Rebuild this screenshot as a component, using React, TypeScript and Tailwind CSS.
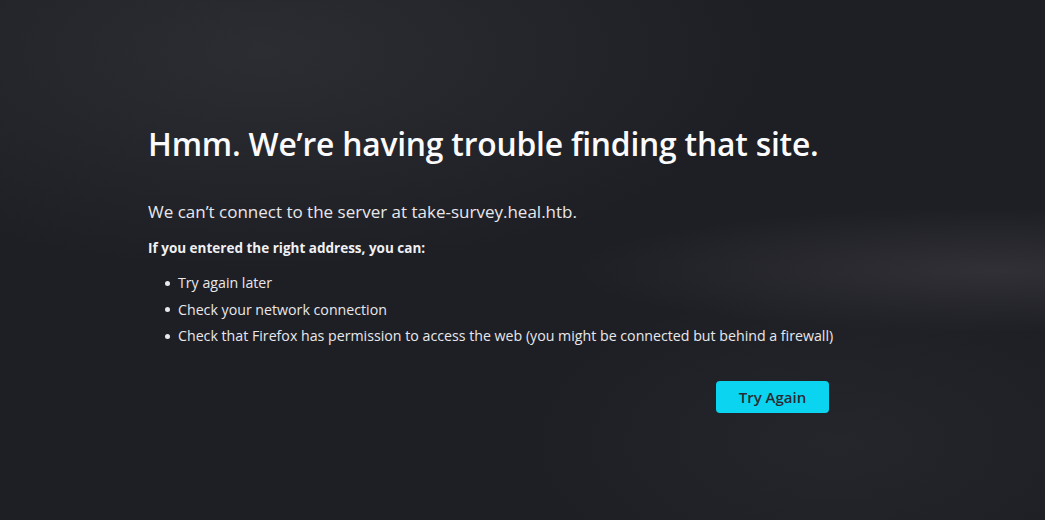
export default function App() {
  return (
    <div className="relative h-[520px] w-full overflow-hidden bg-[#1e1f24] font-['Open_Sans',sans-serif] text-[#fbfbfe]">
      <div className="absolute inset-0 bg-[radial-gradient(ellipse_70%_60%_at_25%_10%,#2c2d32_0%,transparent_70%)]" />
      <div className="absolute inset-0 bg-[radial-gradient(ellipse_40%_12%_at_95%_52%,#303036_0%,transparent_100%)]" />
      <div className="absolute inset-0 bg-[radial-gradient(ellipse_30%_30%_at_80%_85%,#25262b_0%,transparent_100%)]" />
      <div className="relative pl-[148px] pt-[122px]">
        <div className="w-[681px]">
          <h1 className="text-[31.8px] font-semibold leading-[44px] tracking-[-0.2px]">
            Hmm. We’re having trouble finding that site.
          </h1>
          <p className="mt-[34px] text-[17px] leading-[24px] text-[#e8e8ec]">
            We can’t connect to the server at take-survey.heal.htb.
          </p>
          <p className="mt-[14px] text-[13.5px] font-bold leading-[20px] text-[#f0f0f4]">
            If you entered the right address, you can:
          </p>
          <ul className="mt-[15px] flex flex-col gap-[6.5px] whitespace-nowrap pl-[17px] text-[14.2px] leading-[20px] text-[#e8e8ec]">
            <li className="flex items-center">
              <span className="mr-[8px] inline-block h-[5px] w-[5px] shrink-0 rounded-full bg-[#e8e8ec]" />
              Try again later
            </li>
            <li className="flex items-center">
              <span className="mr-[8px] inline-block h-[5px] w-[5px] shrink-0 rounded-full bg-[#e8e8ec]" />
              Check your network connection
            </li>
            <li className="flex items-center">
              <span className="mr-[8px] inline-block h-[5px] w-[5px] shrink-0 rounded-full bg-[#e8e8ec]" />
              Check that Firefox has permission to access the web (you might be connected but behind a firewall)
            </li>
          </ul>
          <div className="mt-[35px] flex justify-end">
            <button className="h-[32px] w-[113px] rounded-[4px] bg-[#0ad4ef] text-[15px] font-semibold text-[#2b2a33]">
              Try Again
            </button>
          </div>
        </div>
      </div>
    </div>
  );
}
